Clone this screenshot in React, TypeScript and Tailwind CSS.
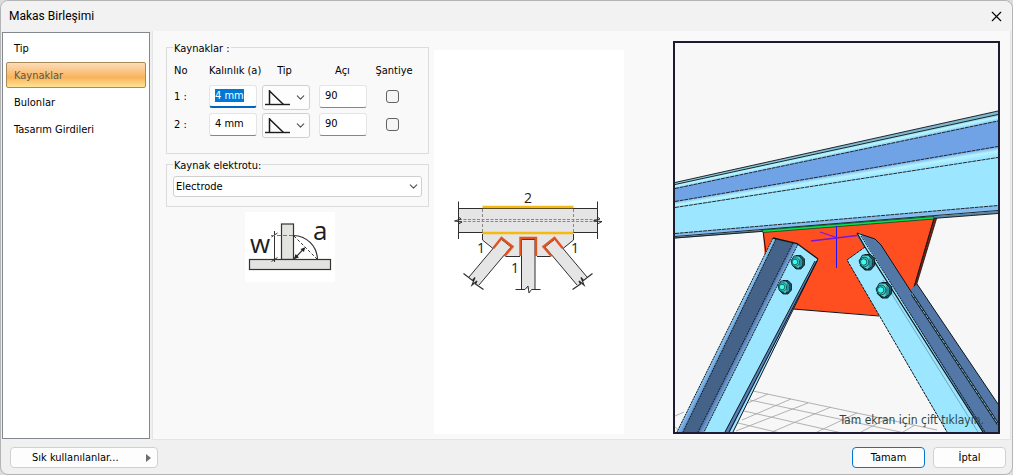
import React, { useEffect, useRef, useState } from "react";
import { ChevronDown, X } from "lucide-react";
import { clsx } from "clsx";

const tabs = ["Tip", "Kaynaklar", "Bulonlar", "Tasarım Girdileri"];

const inputClass =
  "h-[23px] w-12 rounded-[3px] border border-[#e5e5e5] border-b-[#868686] bg-white px-[5px] pb-[2px] outline-none selection:bg-[#0078d7] selection:text-white focus:border-b-2 focus:border-b-[#0067c0] focus:pb-px";

const Sidebar = ({ active, onSelect }: { active: string; onSelect: (tab: string) => void }) => (
  <nav className="flex w-[148px] shrink-0 flex-col gap-px border border-[#828790] bg-white px-[3px] pt-[2px]">
    {tabs.map((tab) => (
      <button
        key={tab}
        type="button"
        onClick={() => onSelect(tab)}
        className={clsx(
          "h-[26px] rounded-[2px] border px-[7px] pt-[2px] text-left",
          tab === active
            ? "border-[#a98a5b] bg-linear-to-b from-[#fbdcb9] from-0% via-[#f9b45a] via-60% to-[#ffe394] text-[#5f5648]"
            : "border-transparent"
        )}
      >
        {tab}
      </button>
    ))}
  </nav>
);

const WeldRow = ({ no, focused }: { no: number; focused?: boolean }) => {
  const ref = useRef<HTMLInputElement>(null);

  useEffect(() => {
    if (focused) {
      ref.current?.focus();
      ref.current?.select();
    }
  }, [focused]);

  return (
    <tr className="h-7 align-top">
      <th scope="row" className="pt-1 text-left font-normal">{no} :</th>
      <td>
        <input ref={ref} aria-label={`Kalınlık ${no}`} defaultValue="4 mm" className={inputClass} />
      </td>
      <td>
        <div className="relative h-[25px] w-12">
          <select
            aria-label={`Tip ${no}`}
            className="h-full w-full appearance-none rounded-[3px] border border-[#cfcfcf] bg-[#fdfdfd] outline-none"
          >
            <option value="fillet" aria-label="Köşe" />
          </select>
          <svg viewBox="0 0 26 17" fill="none" stroke="#1c1c1c" className="pointer-events-none absolute left-[3px] top-1 h-[17px] w-[26px]">
            <path d="M0 15.5H25" strokeWidth="1.4" />
            <path d="M4.5 1V15.5M4.5 2L18.5 15.5" strokeWidth="1.5" />
          </svg>
          <ChevronDown size={13} strokeWidth={2} className="pointer-events-none absolute right-[3px] top-[6px] text-[#505050]" />
        </div>
      </td>
      <td className="pl-1">
        <input aria-label={`Açı ${no}`} defaultValue="90" className={inputClass} />
      </td>
      <td className="pr-1 pt-[5px] text-center">
        <input
          type="checkbox"
          aria-label={`Şantiye ${no}`}
          className="size-[13px] appearance-none rounded-[3px] border border-[#626262] bg-[#f5f5f5] align-top checked:bg-[#0067c0]"
        />
      </td>
    </tr>
  );
};

const WeldSizeDiagram = () => (
  <svg viewBox="245 212 90 70" className="ml-[79px] mt-[5px] h-[70px] w-[90px] bg-white" stroke="#333" fill="none">
    <rect x="281.5" y="224" width="12" height="35.5" fill="#e3e3e1" strokeWidth="1.2" />
    <rect x="249.5" y="259.5" width="81" height="10" fill="#e3e3e1" strokeWidth="1.2" />
    <path d="M274.5 231V262M271.5 237L277.5 233M271.5 261.500L277.5 257.500" />
    <path d="M271 235.500H293" stroke="#777" strokeDasharray="4 2" />
    <path d="M293.500 235.500C307 236 317 246 317.500 259.500" strokeWidth="1.200" />
    <path d="M294 236L317 259" strokeDasharray="3 2" />
    <path d="M294.500 258.500L304.500 248" strokeWidth="1.200" />
    <path d="M294 259L295.500 254L299 257.500ZM305 247.500L300.500 249L304 252Z" fill="#222" stroke="none" />
    <g stroke="none" fill="#1d1d1d" fontFamily="'Open Sans', sans-serif" fontSize="26">
      <text x="250" y="253">w</text>
      <text x="313" y="240">a</text>
    </g>
  </svg>
);

const SideBrace = () => (
  <g>
    <path d="M501 239L511 247L479 285L475 284L474 280L469 277Z" fill="#e5e5e5" stroke="none" />
    <path d="M469 277L501 239L511 247L479 285" />
    <path d="M463.500 273.500L472.500 280.500L475 277.500L472 285L477 281L475.500 284L483.500 289.500" strokeWidth="1.200" />
    <path d="M493.500 248L501.500 238L512.500 246.700L504.500 256" stroke="#e2531f" strokeWidth="2.400" />
  </g>
);

const JointDiagram = () => (
  <svg viewBox="434 50 190 384" className="h-[384px] w-[190px] shrink-0 bg-white" stroke="#2e2e2e" fill="none">
    <path d="M482.500 232V240L502.500 256.500H555L573.500 240V232Z" fill="#e5e5e5" stroke="none" />
    <path d="M482.500 234V240L493 248.500M573.500 234V240L563 248.500M506 256.500H520M537 256.500H550" />
    <path d="M493 248.500L502.500 256.500H506M563 248.500L555 256.500H550" stroke="#888" strokeDasharray="3 2" />
    <rect x="458.500" y="208.500" width="139" height="24" fill="#e5e5e5" />
    <path d="M459 219.500H597M459 221.500H597" stroke="#888" strokeDasharray="3 1.500" />
    <path d="M482.500 209V232M573.500 209V232" stroke="#888" strokeDasharray="3 2" />
    <path d="M458.500 201.500V217L461 219L454.500 221L462 222L458.500 224V239M597.500 201.500V217L600 219L593.500 221L602 221.500L597.500 224V239" />
    <path d="M482.500 207H573.500M482.500 233H573.500" stroke="#f5b912" strokeWidth="2.400" />
    <SideBrace />
    <g transform="translate(1056 0) scale(-1 1)">
      <SideBrace />
    </g>
    <rect x="521.500" y="239" width="13.500" height="50" fill="#e5e5e5" stroke="none" />
    <path d="M521.500 289.500V239.500H535V289.500M515.500 289.500H525L528 286L529 293L531.500 289.500H540.500" />
    <path d="M520.500 256V238H536V256" stroke="#e2531f" strokeWidth="2.400" />
    <g stroke="none" fill="#222" textAnchor="middle" fontFamily="'Open Sans', sans-serif" fontSize="14">
      <text x="528" y="203">2</text>
      <text x="481" y="253">1</text>
      <text x="575" y="253">1</text>
      <text x="515" y="273">1</text>
    </g>
  </svg>
);

const Bolt = ({ x, y, big }: { x: number; y: number; big?: boolean }) => (
  <g transform={`translate(${x} ${y}) scale(${big ? 1.15 : 1})`} stroke="#06171c" strokeWidth="0.8">
    <path d="M-1 -6.500L4 -6.500L7.500 -3L7.500 3L4 7L-1 7L-5 3Z" fill="#1b5060" />
    <path d="M-3 -6L2 -6L5.500 -2L5 4L1 6.500L-4 4L-6 -1Z" fill="#55d3d0" />
    <path d="M3 -4L5.500 -1L5 4L2 5Z" fill="#2a8f9c" stroke="none" />
    <ellipse cx="-1.500" cy="0" rx="4" ry="4.200" fill="#35d9d3" strokeWidth="0.600" />
    <circle cx="-2" cy="0" r="2.800" fill="#3dfbee" strokeWidth="0.600" />
  </g>
);

const Viewer = () => (
  <figure className="relative h-[393px] w-[327px] shrink-0 border-2 border-[#1b1b31] bg-[#f7f7f7]">
    <svg viewBox="675 43 323 389" className="h-full w-full" fill="none">
      <defs>
        <linearGradient id="flange" gradientUnits="userSpaceOnUse" x1="836" y1="173" x2="837.5" y2="182">
          <stop offset="0" stopColor="#70a3e6" />
          <stop offset="0.55" stopColor="#b5f4ff" />
          <stop offset="1" stopColor="#9ce6ff" />
        </linearGradient>
        <linearGradient id="top" gradientUnits="userSpaceOnUse" x1="836" y1="148" x2="837.7" y2="156">
          <stop offset="0" stopColor="#7fb8d0" />
          <stop offset="0.45" stopColor="#b8f8ff" />
          <stop offset="1" stopColor="#7cb3f0" />
        </linearGradient>
        <linearGradient id="fold" gradientUnits="userSpaceOnUse" x1="744" y1="340" x2="752" y2="344">
          <stop offset="0" stopColor="#4a6fa8" />
          <stop offset="1" stopColor="#9ed7ff" />
        </linearGradient>
        <linearGradient id="edge" gradientUnits="userSpaceOnUse" x1="723" y1="334" x2="731" y2="338">
          <stop offset="0" stopColor="#a4e4ff" />
          <stop offset="1" stopColor="#5580c8" />
        </linearGradient>
      </defs>

      {/* ground grid */}
      <g stroke="#a7aaa8" strokeWidth="0.9">
        <path d="M753 391L937 430M750 400L905 433M744 411L842 433M738 423L780 433" />
        <path d="M768 394L748 403M791 399L742 420M808 403L736 431M831 407L772 432M857 413L817 432M886 419L861 432M915 425L903 432" />
        <path d="M675 416L684 412M675 427L681 432" />
      </g>

      {/* gusset plate */}
      <path d="M934 218L937 217L915 290L912 294Z" fill="#8a1f12" stroke="#111" strokeWidth="0.8" />
      <path d="M763 231L934 218L912 294L885 316L793 309L765 262Z" fill="#ff4f21" />
      <path d="M763 231L766 253M793 309L879 316M934 218L912 294" stroke="#111" />

      {/* top chord */}
      <path d="M675 237L998 211V213.500L675 238.500Z" fill="#5c88a5" />
      <path d="M675 182.500L998 111V121L675 188.500Z" fill="url(#top)" />
      <path d="M675 188.500L998 121V146.500L675 201.500Z" fill="#70a3e6" />
      <path d="M675 201.500L998 146.500V157.500L675 207.500Z" fill="url(#flange)" />
      <path d="M675 207.500L998 157.500V205.500L675 233.500Z" fill="#9ce6ff" />
      <path d="M675 233.500L998 205.500V210.500L675 236.500Z" fill="#86bdf0" />
      <g stroke="#0c1419" strokeWidth="0.9">
        <path d="M675 182.500L998 111M675 184.500L998 114.500" />
        <path d="M675 188.500L998 121M675 201.500L998 146.500M675 207.500L998 157.500M675 233.500L998 205.500" strokeDasharray="4 0.700" />
        <path d="M675 236.500L998 210.500M675 238L998 213.500" />
      </g>
      <path d="M762 230L934 216.500V219L763 232.500Z" fill="#08e04f" stroke="#10301a" strokeWidth="0.7" />

      {/* origin marker */}
      <path d="M836 226H837V268H836Z" fill="#2510f0" shapeRendering="crispEdges" />
      <path d="M811 241L857 235.500M820 232L836.500 237.500" stroke="#7a16dc" strokeWidth="1.300" />

      {/* left brace */}
      <path d="M773 238L797 243.500L818 259L733 432H677Z" fill="#9ce6ff" />
      <path d="M773 238L776 239L683 432H677Z" fill="url(#edge)" />
      <path d="M776 239L793 243L698 432H683Z" fill="#456289" />
      <path d="M793 243L798 244L704 432H698Z" fill="url(#fold)" />
      <path d="M815 262L818 259L730 432H725Z" fill="#587fb8" />
      <g stroke="#0c1419">
        <path d="M773 238L797 243.500L818 259" strokeWidth="1.300" />
        <path d="M773 238L677 432M776 239L683 432M793 243L698 432M798 244L704 432" strokeDasharray="2 0.800" />
        <path d="M815 261L725 432M817 261L729 432M818 259L733 432" />
      </g>

      {/* right brace */}
      <path d="M917 284L998 404V432L984 432L908 292Z" fill="#5378a8" />
      <path d="M917 284L998 404" stroke="#0c1419" />
      <path d="M858 233L875 239L881 245L998 425V432H983L857 236Z" fill="#5378a8" />
      <path d="M912 294L998 424" stroke="#101c24" strokeWidth="2.600" />
      <path d="M912 294L998 424" stroke="#94d3d8" strokeWidth="0.900" strokeDasharray="4 1" />
      <path d="M847 260L865 247L857 233L860 233L983 432H947Z" fill="#9ce6ff" />
      <path d="M857 233L875 239L881 245L912 293" stroke="#0c1419" />
      <path d="M865 247L847 260L947 432" stroke="#0c1419" strokeDasharray="3 0.800" />
      <path d="M857 233L865 247L983 432" stroke="#0c1419" strokeWidth="1.200" />
      <path d="M861 236L985 432" stroke="#0c1419" strokeDasharray="2 0.800" />
      <path d="M883 280L978 432" stroke="#6aa0b8" strokeWidth="0.900" />

      <Bolt x={797} y={262} />
      <Bolt x={784} y={287} />
      <Bolt x={866} y={262} big />
      <Bolt x={883} y={290} big />
    </svg>
    <figcaption className="absolute bottom-1 right-[14px] whitespace-nowrap text-[12px] leading-4 text-[#2c4848]">
      Tam ekran için çift tıklayın.
    </figcaption>
  </figure>
);

export default function App() {
  const [active, setActive] = useState("Kaynaklar");

  return (
    <div className="min-h-screen bg-[#dcdcdc]">
      <div className="flex min-h-screen flex-col rounded-[8px] border border-[#b4b4b4] bg-[#f0f0f0] font-['DejaVu_Sans_Condensed','Noto_Sans',sans-serif] text-[11px] leading-4 text-black">
        <header className="flex h-[30px] shrink-0 items-center justify-between rounded-t-[8px] bg-[#f2f2f2] pl-2 pr-[7px]">
          <h1 className="font-[Roboto,sans-serif] text-[12px]">Makas Birleşimi</h1>
          <button type="button" aria-label="Kapat">
            <X size={17} strokeWidth={1.5} />
          </button>
        </header>

        <div className="flex grow">
          <div className="flex pb-px pl-px pt-px">
            <Sidebar active={active} onSelect={setActive} />
          </div>
          <main className="ml-[2px] mr-px flex grow border border-t-0 border-[#e4e4e4] bg-[#f9f9f9] pr-[10px]">
            <section className="ml-[13px] w-[263px] shrink-0 pt-[6px]">
              <fieldset className="h-[117px] border border-[#dcdcdc] px-[6px]">
                <legend className="px-px pt-1">Kaynaklar :</legend>
                <table className="ml-px mt-[6px] table-fixed">
                  <thead>
                    <tr className="h-[22px] align-top">
                      <th className="w-[35px] text-left font-normal">No</th>
                      <th className="w-[53px] whitespace-nowrap text-left font-normal">Kalınlık (a)</th>
                      <th className="w-[53px] pr-2 font-normal">Tip</th>
                      <th className="w-[55px] font-normal">Açı</th>
                      <th className="w-[48px] font-normal">Şantiye</th>
                    </tr>
                  </thead>
                  <tbody>
                    <WeldRow no={1} focused />
                    <WeldRow no={2} />
                  </tbody>
                </table>
              </fieldset>
              <fieldset className="h-[53px] border border-[#dcdcdc] px-[6px]">
                <legend className="px-px pt-1">
                  <label htmlFor="electrode">Kaynak elektrotu:</label>
                </legend>
                <div className="relative mt-[2px]">
                  <select
                    id="electrode"
                    className="h-[21px] w-full appearance-none rounded-[3px] border border-[#cfcfcf] bg-white pl-[2px] outline-none"
                  >
                    <option>Electrode</option>
                  </select>
                  <ChevronDown size={13} strokeWidth={2} className="pointer-events-none absolute right-[2px] top-1 text-[#505050]" />
                </div>
              </fieldset>
              <WeldSizeDiagram />
            </section>
            <div className="ml-[5px] mt-[19px]">
              <JointDiagram />
            </div>
            <div className="ml-auto mt-[10px]">
              <Viewer />
            </div>
          </main>
        </div>

        <footer className="flex h-[34px] shrink-0 items-center gap-2 pl-[9px] pr-[6px] pt-px">
          <button
            type="button"
            className="mr-auto flex h-[21px] w-[148px] items-center justify-between rounded-[4px] border border-[#d0d0d0] bg-[#fdfdfd] pl-[21px] pr-[6px]"
          >
            Sık kullanılanlar...
            <svg viewBox="0 0 5 8" className="h-2 w-[5px]" fill="#6d6d6d">
              <path d="M0 0L5 4L0 8Z" />
            </svg>
          </button>
          <button type="button" className="h-[21px] w-[73px] rounded-[4px] border border-[#0078d4] bg-[#fdfdfd]">
            Tamam
          </button>
          <button type="button" className="h-[21px] w-[73px] rounded-[4px] border border-[#d0d0d0] bg-[#fdfdfd]">
            İptal
          </button>
        </footer>
      </div>
    </div>
  );
}
